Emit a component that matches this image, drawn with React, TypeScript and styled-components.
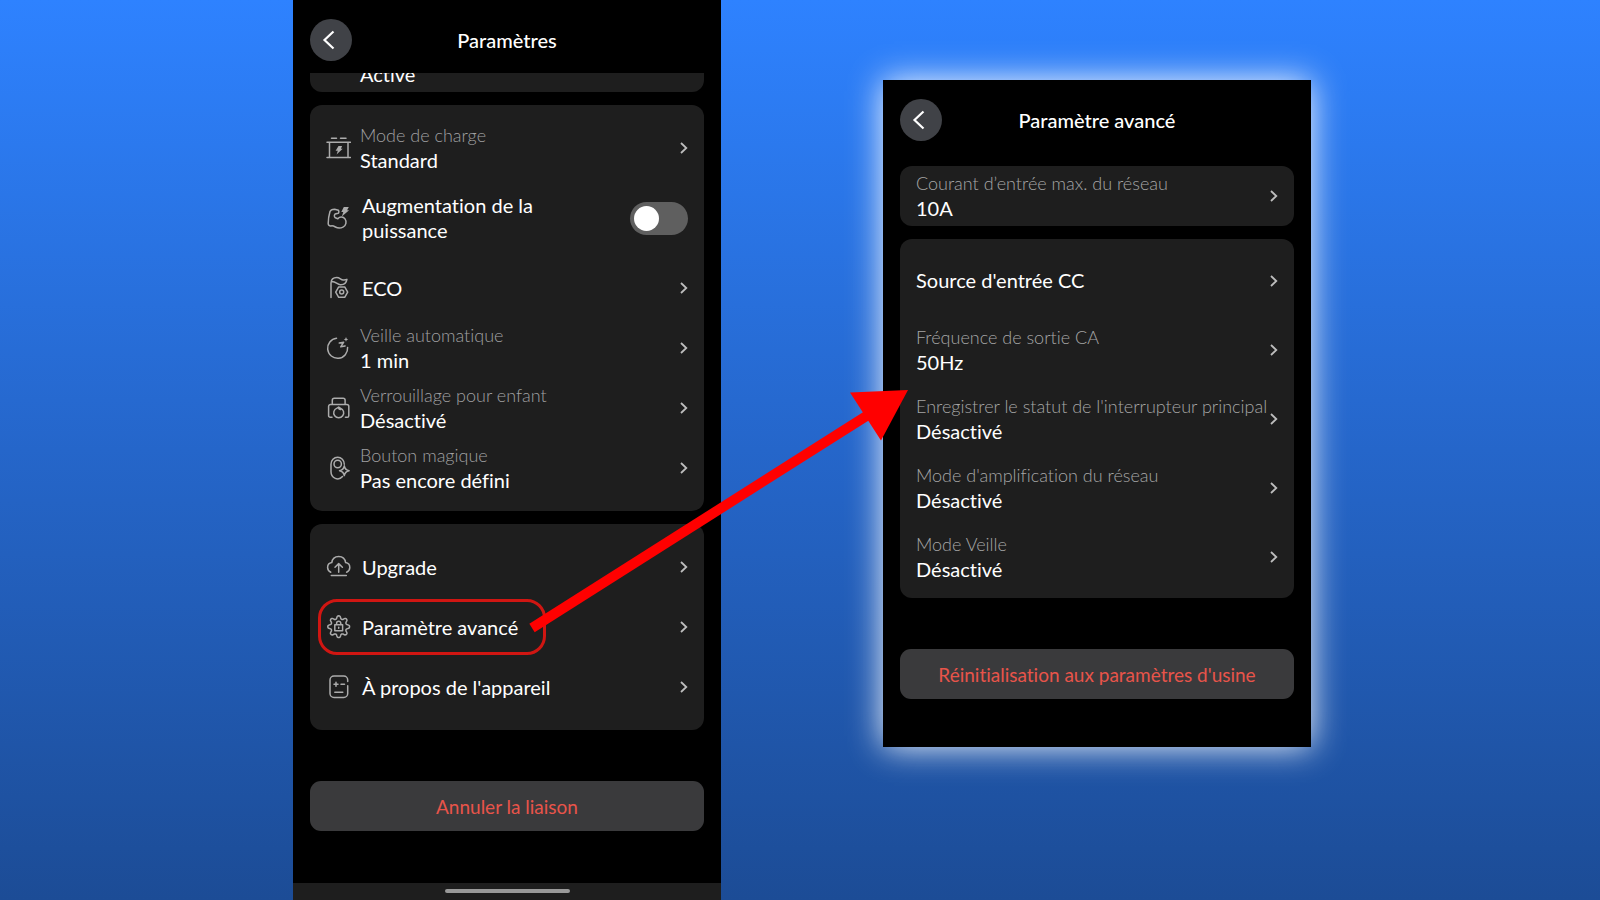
import React, { type ReactNode } from 'react';
import styled, { createGlobalStyle, css } from 'styled-components';

const GlobalStyle = createGlobalStyle`
  *, *::before, *::after { box-sizing: border-box; }
  body {
    margin: 0;
    background: #1c4c96;
    color: #fff;
    font-family: Lato, 'Open Sans', sans-serif;
    font-size: 20px;
    font-variant-ligatures: none;
    line-height: 25px;
  }
  button { font: inherit; font-variant-ligatures: none; color: inherit; border: 0; cursor: pointer; }
`;

const Stage = styled.main`
  position: relative;
  display: grid;
  grid-template-columns: 293fr minmax(0, 428fr) 162fr minmax(0, 428fr) 289fr;
  align-items: start;
  min-height: 100vh;
  background: linear-gradient(#2e82ff, #2566ca 50%, #1c4c96);
  overflow: hidden;
`;

const Phone = styled.section`
  grid-column: 2;
  display: flex;
  flex-direction: column;
  min-height: 100vh;
  background: #000;
`;

const FloatingPhone = styled.section`
  grid-column: 4;
  display: flex;
  flex-direction: column;
  margin-top: 80px;
  padding-bottom: 48px;
  background: #000;
  box-shadow: 0 0 32px rgba(255, 255, 255, 0.95);
`;

const Header = styled.header`
  display: grid;
  grid-template-columns: 42px 1fr 42px;
  align-items: center;
  padding: 19px 17px 12px;
`;

const BackButton = styled.button`
  display: grid;
  place-items: center;
  width: 42px;
  height: 42px;
  padding: 0;
  border-radius: 50%;
  background: #404247;
`;

const Title = styled.h1`
  margin: 0;
  font-size: 20px;
  font-weight: 500;
  text-align: center;
`;

const Content = styled.div<{ $spaced?: boolean }>`
  display: flex;
  flex-direction: column;
  gap: 13px;
  padding: ${({ $spaced }) => ($spaced ? '13px' : '0')} 17px 0;
`;

const Card = styled.div<{ $pad?: number }>`
  padding: ${({ $pad = 0 }) => $pad}px 0;
  border-radius: 12px;
  background: #1e1e1e;
`;

const PeekCard = styled.div`
  display: flex;
  align-items: flex-end;
  height: 19px;
  padding: 0 50px 5px;
  border-radius: 0 0 12px 12px;
  background: #1e1e1e;
  overflow: hidden;
`;

const rowLayout = css<{ $height: number }>`
  position: relative;
  display: flex;
  align-items: center;
  gap: 9px;
  width: 100%;
  height: ${({ $height }) => $height}px;
  padding: 0 16px;
  background: none;
  text-align: left;
`;

const RowButton = styled.button<{ $height: number }>`
  ${rowLayout}
`;

const RowLabel = styled.label<{ $height: number }>`
  ${rowLayout}
  justify-content: space-between;
  cursor: pointer;
`;

const RowText = styled.span<{ $indent?: boolean }>`
  display: flex;
  flex: 1;
  flex-direction: column;
  min-width: 0;
  padding-left: ${({ $indent }) => ($indent ? 2 : 0)}px;
  white-space: nowrap;
`;

const SwitchText = styled.span`
  width: 200px;
  margin-right: auto;
  padding-left: 2px;
`;

const Caption = styled.span<{ $bright?: boolean }>`
  color: ${({ $bright }) => ($bright ? '#a6a6a6' : '#a0a0a2')};
  font-size: 18px;
  font-weight: 300;
`;

const Switch = styled.input`
  appearance: none;
  flex: none;
  width: 58px;
  height: 33px;
  margin: 0;
  padding: 4px;
  border-radius: 17px;
  background: #5f5f5f;
  cursor: pointer;

  &::before {
    content: '';
    display: block;
    width: 25px;
    height: 25px;
    border-radius: 50%;
    background: #fff;
  }
  &:checked { background: #2e82ff; }
  &:checked::before { margin-left: 25px; }
`;

const Highlight = styled.span`
  position: absolute;
  top: 2px;
  left: 8px;
  width: 228px;
  height: 56px;
  border: 3px solid #d01612;
  border-radius: 19px;
`;

const DangerButton = styled.button`
  height: 50px;
  margin-top: 38px;
  border-radius: 11px;
  background: #3a3a3c;
  color: #e8544a;
  font-size: 19px;
`;

const HomeBar = styled.footer`
  display: flex;
  justify-content: center;
  height: 17px;
  margin-top: auto;
  padding-top: 6px;
  background: #1e1e1e;

  &::before {
    content: '';
    width: 125px;
    height: 4px;
    border-radius: 2px;
    background: #999;
  }
`;

const IconSvg = styled.svg`
  flex: none;
  fill: none;
  stroke: #acacac;
  stroke-width: 1.5;
  stroke-linecap: round;
  stroke-linejoin: round;

  .solid { fill: #acacac; stroke: none; }
`;

const ChevronSvg = styled.svg`
  flex: none;
  fill: none;
  stroke: #bdbdbd;
  stroke-width: 1.8;
`;

const ArrowLayer = styled.svg`
  position: absolute;
  top: 0;
  left: 0;
  width: 100%;
  height: 900px;
  pointer-events: none;
`;

const Icon = ({ children }: { children: ReactNode }) => (
  <IconSvg width="25" height="24" viewBox="-1 0 25 24" aria-hidden="true">{children}</IconSvg>
);

// Eight-lobed outline of the gear, sampled around its centre.
const gearOutline = Array.from({ length: 96 }, (_, i) => {
  const a = (i / 96) * Math.PI * 2;
  const wave = Math.cos(a * 8);
  const r = 9.4 + 1.5 * Math.sign(wave) * Math.pow(Math.abs(wave), 0.5);
  return `${i ? 'L' : 'M'}${(11.7 + r * Math.cos(a)).toFixed(2)} ${(11.7 + r * Math.sin(a)).toFixed(2)}`;
}).join('') + 'Z';

const icons = {
  battery: (
    <Icon>
      <path d="M4.5 2.3h5M13.5 2.3h5.5M0 6.3h23.5M0 21.5h23.5M2.5 6.3v15.2M21 6.3v15.2" />
      <path className="solid" d="M11.5 10h3.6l-1.2 2.8h1.8L9.6 18.6l1.2-3.9H8.6z" />
    </Icon>
  ),
  muscle: (
    <Icon>
      <path d="M8.4 11.8c-1.3-1-1.4-2.6-.3-3.8l3.1-.7c.8-.6.9-2.1.2-3L7.6 3.2C5 3.3 3.5 4 3 5.5 1.8 9.5 1.2 13.5 1.2 17.5c0 1.8 1.2 2.6 3 2.4 1.6-.3 2.6.2 4.2 1.1 2.2 1.2 5.4 1.2 7.6.1 3.3-1.7 3.8-5.6 2-8.2-1.7-2.400-5.200-2.500-7.200-.2M8.400 11.800c.8.300 1.600.6 2.400.9" />
      <path className="solid" d="M16.8 1h5l-1.700 3.300h2L14.800 10.600l1.500-4.500h-2z" />
    </Icon>
  ),
  eco: (
    <Icon>
      <path d="M4 21.500V7c0-3.800 2.300-5.500 5.700-5.500 3.200 0 3.900 2.200 6.500 2.400 1.500.1 2.500 0 3.700-.5-.5 3.600-3.200 5.500-6.700 5.300-3-.2-3.700-2.900-8.700-3.100" />
      <path d="M11.700 10.900h6l3 5.200-3 5.200h-6l-3-5.200z" />
      <circle cx="14.700" cy="16.100" r="2" />
    </Icon>
  ),
  sleep: (
    <Icon>
      <path d="M9.500 2.300A10 10 0 1 0 20.600 11.400M12.300 7l4.400-.8-3 4.600 4.400-.8" />
      <path className="solid" d="M19 1.100l.7 1.600 1.600.7-1.600.7-.7 1.600-.7-1.600-1.600-.7 1.600-.7z" />
    </Icon>
  ),
  lock: (
    <Icon>
      <path d="M5.300 8V4.300a2 2 0 0 1 2-2h8.800a2 2 0 0 1 2 2V8" />
      <path d="M5 21.300H3.200a1.600 1.600 0 0 1-1.600-1.600V10.500a2 2 0 0 1 2-2h16.200a2 2 0 0 1 2 2v9.200a1.600 1.600 0 0 1-1.600 1.600h-1.800" />
      <path d="M10 12.100l1.700-1 1.700 1a5 5 0 1 1-3.400 0zM11.700 11.200c-.3 1.700.6 2.600 2.200 2.300" />
    </Icon>
  ),
  magic: (
    <Icon>
      <path d="M17.300 8.200a6.600 7 0 0 0-13.300 0v7.600a6.600 7 0 0 0 11.500 4.700" />
      <circle cx="10.700" cy="8" r="3.700" />
      <path d="M17.300 9.800c.5 3.200 1.600 4.300 4.800 4.900-3.200.6-4.300 1.700-4.800 4.900-.5-3.200-1.600-4.300-4.800-4.900 3.200-.6 4.300-1.700 4.800-4.900z" />
    </Icon>
  ),
  upload: (
    <Icon>
      <path d="M3.800 17.200C1.800 16.300.6 14.700.6 12.500c0-2.600 1.700-4.500 4.200-4.900C5.300 3.800 8 1.400 11.700 1.400s6.400 2.400 6.900 6.200c2.500.4 4.200 2.300 4.200 4.900 0 2.200-1.200 3.800-3.200 4.700M11.700 17.200V9M8 12.200L11.700 8.600l3.700 3.600M4.300 20.500h15" />
    </Icon>
  ),
  gear: (
    <Icon>
      <path d={gearOutline} />
      <path d="M7.800 9.800h7.800v6H7.800zM9.600 9.800V8.300a2.100 2.100 0 0 1 4.200 0v1.500M11.700 12.300v1" />
    </Icon>
  ),
  about: (
    <Icon>
      <path d="M20.700 6.500V5a4 4 0 0 0-4-4H7a4 4 0 0 0-4 4v13.500a4 4 0 0 0 4 4h9.700a4 4 0 0 0 4-4v-7.700M7 9.300h4M9 7.300v4M14 9.300h3.500M7.800 17.300h8" />
    </Icon>
  ),
};

const Chevron = () => (
  <ChevronSvg width="8" height="12" viewBox="0 0 8 12" aria-hidden="true">
    <path d="M1 1l5.300 5L1 11" />
  </ChevronSvg>
);

interface RowProps {
  icon?: ReactNode;
  caption?: string;
  text: string;
  height?: number;
  highlighted?: boolean;
}

const Row = ({ icon, caption, text, height = 60, highlighted }: RowProps) => (
  <RowButton type="button" $height={height}>
    {icon}
    <RowText $indent={Boolean(icon) && !caption}>
      {caption && <Caption $bright={!icon}>{caption}</Caption>}
      <span>{text}</span>
    </RowText>
    <Chevron />
    {highlighted && <Highlight />}
  </RowButton>
);

const ScreenHeader = ({ title }: { title: string }) => (
  <Header>
    <BackButton type="button" aria-label="Retour">
      <svg width="20" height="20" viewBox="0 0 20 20" fill="none" stroke="#fff" strokeWidth="2.2" aria-hidden="true">
        <path d="M12.500 1.500L3.500 10l9 8.500" />
      </svg>
    </BackButton>
    <Title>{title}</Title>
  </Header>
);

export default function App() {
  return (
    <>
      <GlobalStyle />
      <Stage>
        <Phone>
          <ScreenHeader title="Paramètres" />
          <Content>
            <PeekCard>Activé</PeekCard>
            <Card $pad={13}>
              <Row icon={icons.battery} caption="Mode de charge" text="Standard" />
              <RowLabel $height={80}>
                {icons.muscle}
                <SwitchText>Augmentation de la puissance</SwitchText>
                <Switch type="checkbox" role="switch" />
              </RowLabel>
              <Row icon={icons.eco} text="ECO" />
              <Row icon={icons.sleep} caption="Veille automatique" text="1 min" />
              <Row icon={icons.lock} caption="Verrouillage pour enfant" text="Désactivé" />
              <Row icon={icons.magic} caption="Bouton magique" text="Pas encore défini" />
            </Card>
            <Card $pad={13}>
              <Row icon={icons.upload} text="Upgrade" />
              <Row icon={icons.gear} text="Paramètre avancé" highlighted />
              <Row icon={icons.about} text="À propos de l'appareil" />
            </Card>
            <DangerButton type="button">Annuler la liaison</DangerButton>
          </Content>
          <HomeBar />
        </Phone>

        <FloatingPhone>
          <ScreenHeader title="Paramètre avancé" />
          <Content $spaced>
            <Card>
              <Row caption="Courant d’entrée max. du réseau" text="10A" />
            </Card>
            <Card $pad={7}>
              <Row height={69} text="Source d'entrée CC" />
              <Row height={69} caption="Fréquence de sortie CA" text="50Hz" />
              <Row height={69} caption="Enregistrer le statut de l'interrupteur principal" text="Désactivé" />
              <Row height={69} caption="Mode d'amplification du réseau" text="Désactivé" />
              <Row height={69} caption="Mode Veille" text="Désactivé" />
            </Card>
            <DangerButton type="button">Réinitialisation aux paramètres d'usine</DangerButton>
          </Content>
        </FloatingPhone>

        <ArrowLayer viewBox="0 0 1600 900" preserveAspectRatio="none" aria-hidden="true">
          <path d="M532 628L868 415" stroke="#f00" strokeWidth="10" />
          <path d="M908 390L850 392.500L881 440.500z" fill="#f00" />
        </ArrowLayer>
      </Stage>
    </>
  );
}
